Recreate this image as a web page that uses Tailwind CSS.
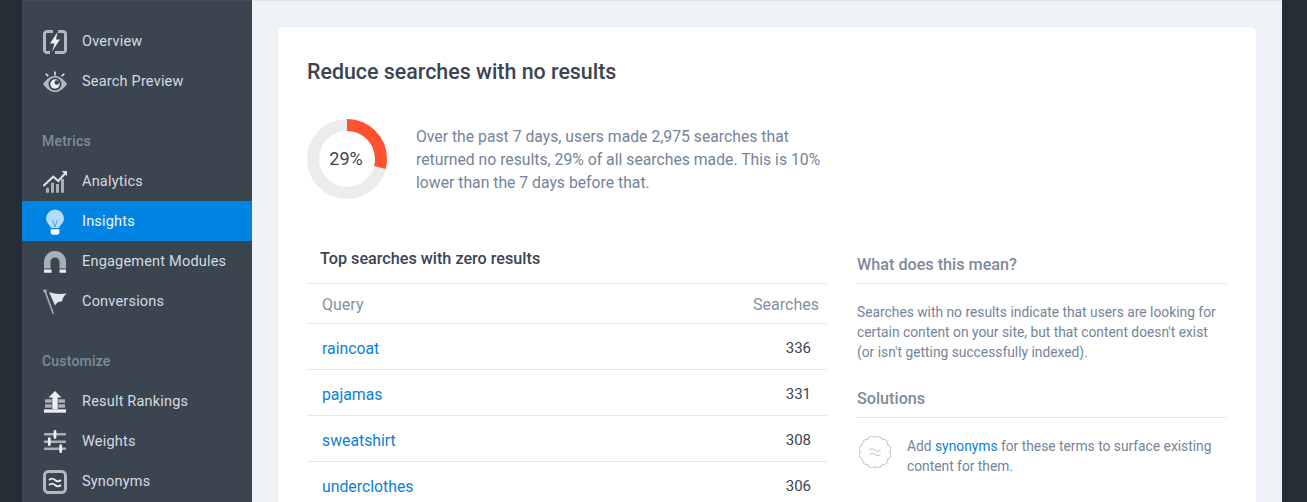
<!DOCTYPE html>
<html lang="en">

<head>
    <meta charset="UTF-8" />
    <meta name="viewport" content="width=device-width, initial-scale=1.0" />
    <title>Insights</title>
    <script src="https://cdn.jsdelivr.net/npm/@tailwindcss/browser@4"></script>
</head>

<body class="bg-[#252e36] font-['Roboto',sans-serif]">
    <div class="flex h-[502px] w-[1307px] overflow-hidden">
        <div class="w-[22px] shrink-0"></div>

        <!-- sidebar -->
        <nav class="w-[230px] shrink-0 bg-[#3b4550] border-t border-[#434d59] pt-[20px] text-[14.5px] tracking-[0.2px] text-[#d5dae0]">
            <a class="flex items-center h-10 pl-5 pt-[2px]">
                <svg class="w-[26px] h-[26px] mr-[14px] shrink-0" viewBox="0 0 26 26" fill="none">
                    <path d="M11 2.500H5A2.500 2.500 0 0 0 2.500 5v16A2.500 2.500 0 0 0 5 23.500h3M16 2.500h5A2.500 2.500 0 0 1 23.500 5v16a2.500 2.500 0 0 1-2.500 2.500h-8" stroke="#b4b9bf" stroke-width="3" />
                    <path d="M15.500 3 8 14.500h4.500L10 22.500l8-12h-4Z" fill="#eceef0" />
                </svg>
                Overview
            </a>
            <a class="flex items-center h-10 pl-5 pt-[2px]">
                <svg class="w-[26px] h-[26px] mr-[14px] shrink-0" viewBox="0 0 26 26" fill="none">
                    <path d="M1 15C5 9.500 9 7 13 7s8 2.500 12 8c-4 5.500-8 8-12 8s-8-2.500-12-8Z" fill="#b4b9bf" />
                    <circle cx="13" cy="15" r="6.500" fill="#3b4550" />
                    <circle cx="13" cy="15" r="4.700" fill="#eceef0" />
                    <circle cx="14.800" cy="13.500" r="2.300" fill="#3b4550" />
                    <path d="M13 2.500v4M3.700 4.700l2.600 2.600M22.300 4.700l-2.600 2.600" stroke="#eceef0" stroke-width="1.500" />
                </svg>
                Search Preview
            </a>

            <div class="mt-[30px] mb-[10px] h-5 leading-5 pl-5 text-[14px] font-medium text-[#7d8b9b]">Metrics</div>
            <a class="flex items-center h-10 pl-5 pt-[2px]">
                <svg class="w-[26px] h-[26px] mr-[14px] shrink-0" viewBox="0 0 26 26" fill="none">
                    <path d="M1.300 17 11.300 7.700 16.300 12 23 4.500" stroke="#dfe2e5" stroke-width="2" />
                    <path d="M19.700 2H25V7.300Z" fill="#dfe2e5" />
                    <path d="M4 18.700h3v5H4ZM9 13.700h3v10H9ZM14 15h3v8.700h-3ZM19 10h3v13.700h-3Z" fill="#a9afb6" />
                </svg>
                Analytics
            </a>
            <a class="flex items-center h-10 pl-5 pt-[2px] bg-[#0084e3] text-[#eaf4fc]">
                <svg class="w-[26px] h-[26px] mr-[14px] shrink-0" viewBox="0 0 26 26" fill="none">
                    <path d="M9 19C8 15.500 4 14 4 9.500a9 9 0 0 1 18 0C22 14 18 15.500 17 19Z" fill="#b5dbf8" />
                    <path d="m10.500 11 2.500 7 2.500-7" stroke="#4aa3e8" stroke-width="1" />
                    <path d="M8.700 20.300h8.600v3a2.500 2.500 0 0 1-2.500 2.500h-3.600a2.500 2.500 0 0 1-2.500-2.500Z" fill="#ffffff" />
                </svg>
                Insights
            </a>
            <a class="flex items-center h-10 pl-5 pt-[2px]">
                <svg class="w-[26px] h-[26px] mr-[14px] shrink-0" viewBox="0 0 26 26" fill="none">
                    <path d="M2 19.500V13a11 11 0 0 1 22 0v6.500h-6.500V13a4.500 4.500 0 0 0-9 0v6.500Z" fill="#a9afb6" />
                    <path d="M2 20.500h7.500v3.300H2ZM17.500 20.500H24v3.300h-6.500Z" fill="#eceef0" />
                </svg>
                Engagement Modules
            </a>
            <a class="flex items-center h-10 pl-5 pt-[2px]">
                <svg class="w-[26px] h-[26px] mr-[14px] shrink-0" viewBox="0 0 26 26" fill="none">
                    <circle cx="3" cy="2" r="1.800" fill="#a9afb6" />
                    <path d="m3 2 8.300 22.700" stroke="#a9afb6" stroke-width="1.600" />
                    <path d="M7 3c5 2 11 2.500 18 1.500-3 2-4.500 4.500-5 8-3-.5-5 .5-7 4Z" fill="#e3e6e9" />
                </svg>
                Conversions
            </a>

            <div class="mt-[30px] mb-[10px] h-5 leading-5 pl-5 text-[14px] font-medium text-[#7d8b9b]">Customize</div>
            <a class="flex items-center h-10 pl-5 pt-[2px]">
                <svg class="w-[26px] h-[26px] mr-[14px] shrink-0" viewBox="0 0 26 26" fill="none">
                    <path d="M13 2 19.500 8.500H15.700V20H10.300V8.500H6.500Z" fill="#eceef0" />
                    <path d="M3 10.300h6.700v3.400H3ZM16.300 10.300H23v3.400h-6.700ZM3 15.300h6.700v3.400H3ZM16.300 15.300H23v3.400h-6.700Z" fill="#a9afb6" />
                    <path d="M2 20.300h22v3.400H2Z" fill="#eceef0" />
                </svg>
                Result Rankings
            </a>
            <a class="flex items-center h-10 pl-5 pt-[2px]">
                <svg class="w-[26px] h-[26px] mr-[14px] shrink-0" viewBox="0 0 26 26" fill="none">
                    <path d="M3 5.300h20M3 12.700h20M3 19.700h20" stroke="#a9afb6" stroke-width="2.400" stroke-linecap="round" />
                    <path d="M13 2.500v6M7.300 9.700v6M18.700 16.700v6" stroke="#eceef0" stroke-width="2.800" stroke-linecap="round" />
                </svg>
                Weights
            </a>
            <a class="flex items-center h-10 pl-5 pt-[2px]">
                <svg class="w-[26px] h-[26px] mr-[14px] shrink-0" viewBox="0 0 26 26" fill="none">
                    <rect x="2.500" y="2.500" width="21" height="21" rx="4" stroke="#b4b9bf" stroke-width="3" />
                    <path d="M7 11c2-1.800 4-1.800 6 0s4 1.800 6 0M7 16c2-1.800 4-1.800 6 0s4 1.800 6 0" stroke="#eceef0" stroke-width="1.800" />
                </svg>
                Synonyms
            </a>
        </nav>

        <!-- main -->
        <main class="w-[1030px] shrink-0 bg-[#eff3f7] border-t border-[#dfe3e8] pt-[25px] px-[25px]">
            <div class="h-[600px] bg-white rounded-md p-[30px] border border-[#ebeef2]">
                <h1 class="text-[21.400px] leading-[30px] font-medium text-[#3b4552] -ml-[1px]">Reduce searches with no results</h1>

                <div class="flex items-center mt-[32px] -ml-[1px]">
                    <div class="relative w-20 h-20 shrink-0">
                        <svg class="w-20 h-20 -rotate-90" viewBox="0 0 80 80" fill="none">
                            <circle cx="40" cy="40" r="34" stroke="#ececec" stroke-width="12" />
                            <circle cx="40" cy="40" r="34" stroke="#ff5230" stroke-width="12" stroke-dasharray="62 213.600" />
                        </svg>
                        <span class="absolute inset-0 flex items-center justify-center pr-[2px] pb-[2px] text-[18px] text-[#3b4552]">29%</span>
                    </div>
                    <p class="ml-[29px] w-[420px] text-[15.750px] leading-[23px] text-[#74849a]">Over the past 7 days, users made 2,975 searches that returned no results, 29% of all searches made. This is 10% lower than the 7 days before that.</p>
                </div>

                <div class="flex mt-[44px] -ml-[1px]">
                    <div class="w-[520px] shrink-0">
                        <h2 class="h-[41px] pl-[13px] text-[16.200px] leading-[32px] font-medium text-[#3b4552] border-b border-[#e3e6ea]">Top searches with zero results</h2>
                        <div class="flex justify-between items-center h-10 pl-[15px] pr-2 pt-[2px] text-[16px] text-[#8292a5] border-b border-[#e3e6ea]"><span>Query</span><span>Searches</span></div>
                        <div class="flex justify-between items-center h-[46px] pl-[15px] pr-4 pt-[3px] text-[15.800px] border-b border-[#e3e6ea]"><a class="pt-[2px] text-[#0a7fd6]">raincoat</a><span class="text-[15px] text-[#3b4552]">336</span></div>
                        <div class="flex justify-between items-center h-[46px] pl-[15px] pr-4 pt-[3px] text-[15.800px] border-b border-[#e3e6ea]"><a class="pt-[2px] text-[#0a7fd6]">pajamas</a><span class="text-[15px] text-[#3b4552]">331</span></div>
                        <div class="flex justify-between items-center h-[46px] pl-[15px] pr-4 pt-[3px] text-[15.800px] border-b border-[#e3e6ea]"><a class="pt-[2px] text-[#0a7fd6]">sweatshirt</a><span class="text-[15px] text-[#3b4552]">308</span></div>
                        <div class="flex justify-between items-center h-[46px] pl-[15px] pr-4 pt-[3px] text-[15.800px] border-b border-[#e3e6ea]"><a class="pt-[2px] text-[#0a7fd6]">underclothes</a><span class="text-[15px] text-[#3b4552]">306</span></div>
                    </div>

                    <div class="ml-[30px] w-[370px] shrink-0 pt-[11px] text-[#74849a]">
                        <h3 class="h-[30px] text-[16.200px] leading-[22px] font-medium text-[#7d8b9b] border-b border-[#e3e6ea]">What does this mean?</h3>
                        <p class="mt-[18px] text-[13.800px] leading-[20px]">Searches with no results indicate that users are looking for certain content on your site, but that content doesn't exist (or isn't getting successfully indexed).</p>
                        <h3 class="mt-[26px] h-[30px] text-[16.200px] leading-[22px] font-medium text-[#7d8b9b] border-b border-[#e3e6ea]">Solutions</h3>
                        <div class="flex mt-[18px]">
                            <svg class="w-[32px] h-[32px] ml-[2px] mr-[16px] shrink-0" viewBox="0 0 32 32" fill="none">
                                <path d="M16 1.500A4.400 4.400 0 0 1 23.300 3.500A4.400 4.400 0 0 1 28.500 8.700A4.400 4.400 0 0 1 30.500 16A4.400 4.400 0 0 1 28.500 23.300A4.400 4.400 0 0 1 23.300 28.500A4.400 4.400 0 0 1 16 30.500A4.400 4.400 0 0 1 8.700 28.500A4.400 4.400 0 0 1 3.500 23.300A4.400 4.400 0 0 1 1.500 16A4.400 4.400 0 0 1 3.500 8.700A4.400 4.400 0 0 1 8.700 3.500A4.400 4.400 0 0 1 16 1.500Z" stroke="#ccd0d4" stroke-width="1.200" />
                                <path d="M10.500 14c2-1.500 3.500-1.500 5.500 0s3.500 1.500 5.500 0M10.500 18.500c2-1.500 3.500-1.500 5.500 0s3.500 1.500 5.500 0" stroke="#ccd0d4" stroke-width="1.200" />
                            </svg>
                            <p class="text-[13.800px] leading-[20px] w-[310px]">Add <a class="text-[#0a7fd6]">synonyms</a> for these terms to surface existing content for them.</p>
                        </div>
                    </div>
                </div>
            </div>
        </main>

        <div class="flex-1"></div>
    </div>
</body>

</html>
